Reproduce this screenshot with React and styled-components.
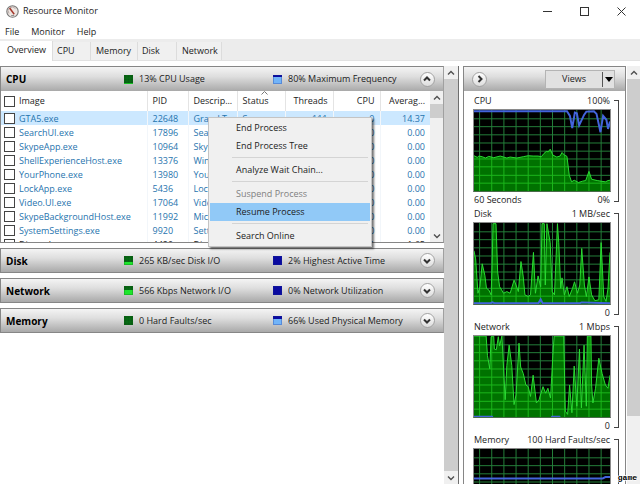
import React from 'react';
import styled, { createGlobalStyle, css } from 'styled-components';

const GlobalStyle = createGlobalStyle`
  * { box-sizing: border-box; }
  html, body { margin: 0; height: 100%; overflow: hidden; }
  body {
    background: #fff;
    color: #1c1c1c;
    font: 9px/14px "Open Sans", "Noto Sans", sans-serif;
  }
  #root { height: 100%; }
  button, input { font: inherit; color: inherit; }
  button { padding: 0; border: 0; background: none; }
`;

const Window = styled.div`
  display: flex;
  flex-direction: column;
  height: 100vh;
  position: relative;
  overflow: hidden;
`;

const TitleBar = styled.header`
  display: flex;
  align-items: center;
  height: 22px;
  padding-left: 6px;
`;

const Title = styled.h1`
  flex: 1;
  margin: 0 0 0 4px;
  font-size: 9px;
  font-weight: 400;
`;

const CaptionButton = styled.button`
  display: grid;
  place-items: center;
  width: 37px;
  height: 22px;
`;

const MenuBar = styled.nav`
  display: flex;
  align-items: center;
  gap: 12px;
  height: 17px;
  padding: 3px 0 0 5px;
`;

const MenuButton = styled.button`
  line-height: 14px;
`;

const TabStrip = styled.div`
  display: flex;
  align-items: flex-end;
  height: 22px;
  flex: none;
  background: #ececec;
  border-bottom: 1px solid #e2e2e2;
`;

const Tab = styled.button`
  height: 18px;
  width: ${(p) => p.$width}px;
  padding-left: ${(p) => p.$inset}px;
  line-height: 14px;
  text-align: left;
  background: #f0f0f0;
  border-right: 1px solid #dcdcdc;
  ${(p) => p.$active && css`
    height: 20px;
    padding-bottom: 2px;
    background: #fff;
    margin-bottom: -1px;
  `}
`;

const Body = styled.main`
  display: flex;
  flex: 1;
  min-height: 0;
  padding-top: 5px;
  background: #fff;
`;

const Sections = styled.div`
  flex: 1;
  min-width: 0;
  display: flex;
  flex-direction: column;
  gap: 5px;
`;

const Section = styled.section`
  border: 1px solid #868686;
  border-right-color: #a0a0a0;
`;

const SectionHeader = styled.div`
  display: grid;
  grid-template-columns: 118px 149px 1fr 24px;
  align-items: center;
  height: ${(p) => (p.$open ? 24 : 23)}px;
  padding: 0 4px 0 5px;
  background: linear-gradient(#f4f4f4, #dedede 40%, #a9a9a9);
`;

const SectionTitle = styled.h2`
  margin: 0;
  font-size: 10px;
  line-height: 16px;
  font-weight: 700;
  color: #000;
`;

const Metric = styled.span`
  display: flex;
  align-items: center;
  gap: 6px;
  white-space: nowrap;
`;

const RoundButton = styled.button`
  display: grid;
  place-items: center;
  width: 15px;
  height: 15px;
  border: 1px solid #a2a2a2;
  border-radius: 50%;
  background: linear-gradient(#fff, #dcdcdc);
  justify-self: center;
`;

const List = styled.div`
  display: flex;
  height: 151px;
  overflow: hidden;
`;

const TableBox = styled.div`
  flex: 1;
  min-width: 0;
  overflow: hidden;
`;

const Table = styled.table`
  width: 100%;
  table-layout: fixed;
  border-collapse: collapse;
`;

const HeadCell = styled.th`
  position: relative;
  height: 20px;
  padding: 0 5px;
  font-weight: 400;
  text-align: ${(p) => (p.$right ? 'right' : 'left')};
  white-space: nowrap;
  border-right: 1px solid #e4e4e4;
  &:last-child { border-right: 0; }
`;

const SortMark = styled.svg`
  position: absolute;
  top: 0;
  left: 50%;
`;

const Row = styled.tr`
  color: ${(p) => (p.$running ? '#1c1c1c' : '#1f74ae')};
  background: ${(p) => (p.$selected ? '#cce8ff' : '#fff')};
`;

const Cell = styled.td`
  height: 14px;
  padding: 0 5px;
  line-height: 13px;
  text-align: ${(p) => (p.$right ? 'right' : 'left')};
  white-space: nowrap;
  overflow: hidden;
  border-right: 1px solid #f2f6fa;
  &:last-child { border-right: 0; }
`;

const CheckLabel = styled.label`
  display: flex;
  align-items: center;
  gap: 4px;
  margin-left: -2px;
`;

const Check = styled.input.attrs({ type: 'checkbox' })`
  appearance: none;
  flex: none;
  width: 11px;
  height: 11px;
  margin: 0;
  border: 1px solid #444;
  background: #fff;
`;

const Scrollbar = styled.div`
  display: flex;
  flex-direction: column;
  flex: none;
  width: ${(p) => p.$width}px;
  background: #f0f0f0;
`;

const ScrollButton = styled.button`
  display: grid;
  place-items: center;
  width: 100%;
  height: 13px;
`;

const ScrollTrack = styled.div`
  display: flex;
  flex-direction: column;
  flex: 1;
`;

const Thumb = styled.div`
  flex: 0 0 ${(p) => p.$length};
  background: #cdcdcd;
`;

const GraphPane = styled.aside`
  display: flex;
  flex: none;
  width: 182px;
  padding-left: 4px;
  border-left: 1px solid #6e6e6e;
`;

const GraphColumn = styled.div`
  flex: 1;
  min-width: 0;
  border: 1px solid #868686;
  border-bottom: 0;
  margin-right: 1px;
  overflow: hidden;
`;

const GraphHeader = styled.div`
  display: flex;
  align-items: center;
  justify-content: space-between;
  height: 24px;
  margin-bottom: 2px;
  padding: 0 10px 0 8px;
  background: linear-gradient(#f4f4f4, #dedede 40%, #a9a9a9);
`;

const ViewsButton = styled.button`
  display: grid;
  grid-template-columns: 1fr 12px;
  align-items: center;
  width: 70px;
  height: 19px;
  background: #e1e1e1;
  border: 1px solid #b4b4b4;
`;

const ViewsArrow = styled.span`
  display: grid;
  place-items: center;
  height: 15px;
  border-left: 1px solid #555;
`;

const Graph = styled.figure`
  display: grid;
  grid-template-columns: 1fr 8px;
  margin: 0 6px 0 9px;
`;

const GraphCaption = styled.div`
  display: flex;
  justify-content: space-between;
  height: ${(p) => (p.$bottom ? 14 : 16)}px;
  padding: 0 1px;
  line-height: 16px;
`;

const Plot = styled.svg`
  display: block;
  width: 100%;
  height: 83px;
  background: #000;
  border: 1px solid #8a8a8a;
  border-bottom-color: #4a6a4a;
`;

const Bracket = styled.div`
  grid-column: 2;
  grid-row: 1 / span 3;
  margin: 7px 0 4px 3px;
  border: 1px solid #444;
  border-left: 0;
`;

const ContextMenu = styled.div`
  position: absolute;
  left: 208px;
  top: 117px;
  width: 164px;
  padding: 1px;
  background: #f0f0f0;
  border: 1px solid #c4c4c4;
  box-shadow: 2px 2px 2px rgba(0, 0, 0, 0.55);
`;

const MenuItem = styled.button`
  display: block;
  width: 100%;
  height: 18px;
  padding-left: 26px;
  line-height: 18px;
  text-align: left;
  color: ${(p) => (p.disabled ? '#808080' : '#1c1c1c')};
  background: ${(p) => (p.$active ? '#91c9f7' : 'transparent')};
`;

const MenuRule = styled.hr`
  height: 1px;
  margin: 2px 2px 3px 22px;
  border: 0;
  background: #d4d4d4;
`;

const Watermark = styled.span`
  position: absolute;
  right: 3px;
  bottom: 0;
  font: 700 8px/12px "Liberation Mono", monospace;
  color: #000;
  text-shadow: 1px 0 #fff, -1px 0 #fff, 0 1px #fff, 0 -1px #fff;
`;

function Chevron({ dir = 'down', size = 8, color = '#333', weight = 2 }) {
  const paths = {
    down: 'M1 2.5 L4 5.5 L7 2.5',
    up: 'M1 5.5 L4 2.5 L7 5.5',
    right: 'M2.5 1 L5.5 4 L2.5 7',
  };
  return (
    <svg width={size} height={size} viewBox="0 0 8 8" fill="none" stroke={color} strokeWidth={weight} aria-hidden="true">
      <path d={paths[dir]} />
    </svg>
  );
}

function AppIcon() {
  return (
    <svg width="13" height="13" viewBox="0 0 13 13" aria-hidden="true">
      <circle cx="6.5" cy="6.5" r="5.7" fill="#eee6e2" stroke="#777" strokeWidth="1.1" />
      <path d="M3 8.5 A4 4 0 0 1 9.5 3.7" fill="none" stroke="#b8aaa6" />
      <path d="M3.6 3 L8.2 9.3" stroke="#a5382c" strokeWidth="1.5" />
      <path d="M5.2 10.5 H8.2" stroke="#8d8d8d" />
    </svg>
  );
}

function Meter({ level, blue }) {
  const height = Math.round(9 * level);
  return (
    <svg width="9" height="9" viewBox="0 0 9 9" aria-hidden="true">
      <rect width="9" height="9" fill={blue ? '#0a0aa0' : '#075c12'} />
      {!blue && <path d="M3 0V9M6 0V9M0 3H9M0 6H9" stroke="#0a7d18" strokeWidth="0.5" />}
      <rect y={9 - height} width="9" height={height} fill={blue ? '#72b4f8' : '#1ee62c'} />
      <rect x="0.5" y="0.5" width="8" height="8" fill="none" stroke={blue ? '#1c2c90' : '#0c6414'} strokeOpacity="0.3" />
    </svg>
  );
}

const verticals = [17, 54, 91, 128, 165, 202, 239, 276, 313, 350, 387];
const horizontals = [27, 51, 76, 101, 126, 150, 174, 200, 224];
const gridPath = verticals.map((x) => `M${x} 0V248`).join('') + horizontals.map((y) => `M0 ${y}H414`).join('');

function GraphPlot({ id, label, green, blue }) {
  const area = green && `0,248 ${green} 414,248`;
  return (
    <Plot viewBox="0 0 414 248" preserveAspectRatio="none" role="img" aria-label={label}>
      <path d={gridPath} fill="none" stroke="#25803a" strokeWidth="3" />
      {area && (
        <>
          <clipPath id={id}><polygon points={area} /></clipPath>
          <polygon points={area} fill="#007200" />
          <path d={gridPath} clipPath={`url(#${id})`} fill="none" stroke="#1cb81c" strokeWidth="3" />
          <polyline points={green} fill="none" stroke="#2bdc33" strokeWidth="3" />
        </>
      )}
      <polyline points={blue} fill="none" stroke="#4364dc" strokeWidth="6" />
    </Plot>
  );
}

const graphs = [
  {
    name: 'CPU', max: '100%', left: '60 Seconds', min: '0%',
    green: '0,140 10,145 15,141 25,143 35,147 45,142 60,146 80,141 100,147 110,144 130,147 150,143 165,140 180,141 195,141 205,143 213,133 220,127 226,128 232,120 240,138 252,144 262,141 268,130 275,138 283,142 290,200 297,220 305,215 318,222 330,218 340,216 350,188 358,212 375,216 400,220 408,216 414,215',
    blue: '0,4 283,4 292,18 299,55 307,8 313,10 320,47 335,15 342,5 365,4 373,12 385,68 393,18 403,30 408,58 414,35',
  },
  {
    name: 'Disk', max: '1 MB/sec', left: '', min: '0',
    green: '0,85 5,110 12,215 18,195 25,125 33,160 38,200 45,205 52,220 55,130 58,2 67,2 72,150 78,195 90,215 100,210 110,215 122,175 128,190 135,210 143,118 150,165 155,220 165,225 172,220 181,90 187,215 195,162 203,195 207,2 214,2 217,190 222,2 232,60 238,210 245,220 250,100 254,2 258,60 264,200 268,168 275,220 283,195 290,225 300,200 306,180 315,215 322,190 328,78 336,190 342,225 350,165 358,220 368,238 380,235 387,60 395,225 402,240 408,200 414,90',
    blue: '0,246 50,246 56,243 64,246 196,246 203,234 209,246 320,246 328,243 414,246',
  },
  {
    name: 'Network', max: '1 Mbps', left: '', min: '0',
    green: '0,0 37,0 41,60 48,100 52,2 60,0 62,40 68,42 74,2 78,30 85,0 95,195 100,90 107,28 115,90 122,210 128,180 137,22 142,95 150,115 158,150 165,155 172,185 180,120 190,205 198,195 210,155 218,175 225,160 233,190 240,60 244,0 273,0 278,230 285,240 291,150 298,235 305,92 313,215 321,40 327,220 335,28 342,215 345,0 356,0 358,150 362,205 370,160 380,68 390,115 400,150 408,160 414,120',
    blue: '0,247 55,247 58,252 235,252 238,247 260,247 262,252 414,252',
  },
  { name: 'Memory', max: '100 Hard Faults/sec', left: '', min: '0', blue: '0,90 392,90 400,86 414,86' },
];

const processes = [
  ['GTA5.exe', '22648', 'Grand T...', 'Suspe...', '111', '0', '14.37'],
  ['SearchUI.exe', '17896', 'Search...', 'Suspe...', '34', '0', '0.00'],
  ['SkypeApp.exe', '10964', 'SkypeA...', 'Suspe...', '43', '0', '0.00'],
  ['ShellExperienceHost.exe', '13376', 'Windo...', 'Suspe...', '28', '0', '0.00'],
  ['YourPhone.exe', '13980', 'YourPh...', 'Suspe...', '16', '0', '0.00'],
  ['LockApp.exe', '5436', 'LockAp...', 'Suspe...', '12', '0', '0.00'],
  ['Video.UI.exe', '17064', 'Video A...', 'Suspe...', '24', '0', '0.00'],
  ['SkypeBackgroundHost.exe', '11992', 'Micros...', 'Suspe...', '5', '0', '0.00'],
  ['SystemSettings.exe', '9920', 'Setting...', 'Suspe...', '19', '0', '0.00'],
  ['Discord.exe', '4420', 'Discord', 'Runni...', '41', '1', '1.65'],
];

const columns = [
  { name: 'PID', width: 41 },
  { name: 'Descrip...', width: 49 },
  { name: 'Status', width: 48, sorted: true },
  { name: 'Threads', width: 48, right: true },
  { name: 'CPU', width: 47, right: true },
  { name: 'Averag...', width: 50, right: true },
];

const tabs = [['Overview', 53, 7], ['CPU', 38, 4], ['Memory', 47, 5], ['Disk', 39, 4], ['Network', 45, 5]];

function ScrollRail({ width = 13, length }) {
  return (
    <Scrollbar $width={width}>
      <ScrollButton aria-label="Scroll up"><Chevron dir="up" weight={1.4} color="#505050" /></ScrollButton>
      <ScrollTrack><Thumb $length={length} /></ScrollTrack>
      <ScrollButton aria-label="Scroll down"><Chevron weight={1.4} color="#505050" /></ScrollButton>
    </Scrollbar>
  );
}

function ResourceSection({ title, first, firstLevel, second, secondLevel, children }) {
  const open = Boolean(children);
  return (
    <Section>
      <SectionHeader $open={open}>
        <SectionTitle>{title}</SectionTitle>
        <Metric><Meter level={firstLevel} />{first}</Metric>
        <Metric><Meter blue level={secondLevel} />{second}</Metric>
        <RoundButton aria-label={`Toggle ${title}`} aria-expanded={open}><Chevron dir={open ? 'up' : 'down'} /></RoundButton>
      </SectionHeader>
      {children}
    </Section>
  );
}

function ProcessList() {
  return (
    <List>
      <TableBox>
        <Table>
          <colgroup>
            <col />
            {columns.map((c) => <col key={c.name} width={c.width} />)}
          </colgroup>
          <thead>
            <tr>
              <HeadCell><CheckLabel><Check />Image</CheckLabel></HeadCell>
              {columns.map((c) => (
                <HeadCell key={c.name} $right={c.right} aria-sort={c.sorted ? 'ascending' : undefined}>
                  {c.sorted && <SortMark width="7" height="4" viewBox="0 0 7 4"><path d="M0.5 3.5 L3.5 0.5 L6.5 3.5" fill="none" stroke="#777" /></SortMark>}
                  {c.name}
                </HeadCell>
              ))}
            </tr>
          </thead>
          <tbody>
            {processes.map(([name, ...values], i) => (
              <Row key={name} $selected={i === 0} $running={name === 'Discord.exe'}>
                <Cell><CheckLabel><Check />{name}</CheckLabel></Cell>
                {values.map((v, n) => <Cell key={columns[n].name} $right={columns[n].right}>{v}</Cell>)}
              </Row>
            ))}
          </tbody>
        </Table>
      </TableBox>
      <ScrollRail length="14px" />
    </List>
  );
}

export default function App() {
  return (
    <>
      <GlobalStyle />
      <Window>
        <TitleBar>
          <AppIcon />
          <Title>Resource Monitor</Title>
          <CaptionButton aria-label="Minimize"><svg width="9" height="9"><path d="M0 4.5H9" stroke="#333" /></svg></CaptionButton>
          <CaptionButton aria-label="Maximize"><svg width="9" height="9"><rect x="0.5" y="0.5" width="8" height="8" fill="none" stroke="#333" /></svg></CaptionButton>
          <CaptionButton aria-label="Close"><svg width="9" height="9"><path d="M0.5 0.5L8.5 8.5M8.5 0.5L0.5 8.5" stroke="#333" /></svg></CaptionButton>
        </TitleBar>
        <MenuBar>
          {['File', 'Monitor', 'Help'].map((m) => <MenuButton key={m}>{m}</MenuButton>)}
        </MenuBar>
        <TabStrip role="tablist">
          {tabs.map(([name, width, inset], i) => (
            <Tab key={name} role="tab" aria-selected={i === 0} $active={i === 0} $width={width} $inset={inset}>{name}</Tab>
          ))}
        </TabStrip>
        <Body>
          <Sections>
            <ResourceSection title="CPU" first="13% CPU Usage" firstLevel={0.1} second="80% Maximum Frequency" secondLevel={0.8}>
              <ProcessList />
            </ResourceSection>
            <ResourceSection title="Disk" first="265 KB/sec Disk I/O" firstLevel={0.34} second="2% Highest Active Time" secondLevel={0} />
            <ResourceSection title="Network" first="566 Kbps Network I/O" firstLevel={0.6} second="0% Network Utilization" secondLevel={0} />
            <ResourceSection title="Memory" first="0 Hard Faults/sec" firstLevel={0} second="66% Used Physical Memory" secondLevel={0.66} />
          </Sections>
          <ScrollRail width={14} length="100%" />
          <GraphPane>
            <GraphColumn>
              <GraphHeader>
                <RoundButton aria-label="Hide graphs"><Chevron dir="right" /></RoundButton>
                <ViewsButton>
                  Views
                  <ViewsArrow><svg width="8" height="5" viewBox="0 0 8 5"><path d="M0 0H8L4 5Z" fill="#000" /></svg></ViewsArrow>
                </ViewsButton>
              </GraphHeader>
              {graphs.map((g) => (
                <Graph key={g.name}>
                  <GraphCaption><span>{g.name}</span><span>{g.max}</span></GraphCaption>
                  <GraphPlot id={`area-${g.name}`} label={`${g.name} history`} green={g.green} blue={g.blue} />
                  <GraphCaption $bottom><span>{g.left}</span><span>{g.min}</span></GraphCaption>
                  <Bracket />
                </Graph>
              ))}
            </GraphColumn>
            <ScrollRail length="86%" />
          </GraphPane>
        </Body>
        <ContextMenu role="menu">
          <MenuItem role="menuitem">End Process</MenuItem>
          <MenuItem role="menuitem">End Process Tree</MenuItem>
          <MenuRule />
          <MenuItem role="menuitem">Analyze Wait Chain...</MenuItem>
          <MenuRule />
          <MenuItem role="menuitem" disabled>Suspend Process</MenuItem>
          <MenuItem role="menuitem" $active>Resume Process</MenuItem>
          <MenuRule />
          <MenuItem role="menuitem">Search Online</MenuItem>
        </ContextMenu>
        <Watermark>game</Watermark>
      </Window>
    </>
  );
}
